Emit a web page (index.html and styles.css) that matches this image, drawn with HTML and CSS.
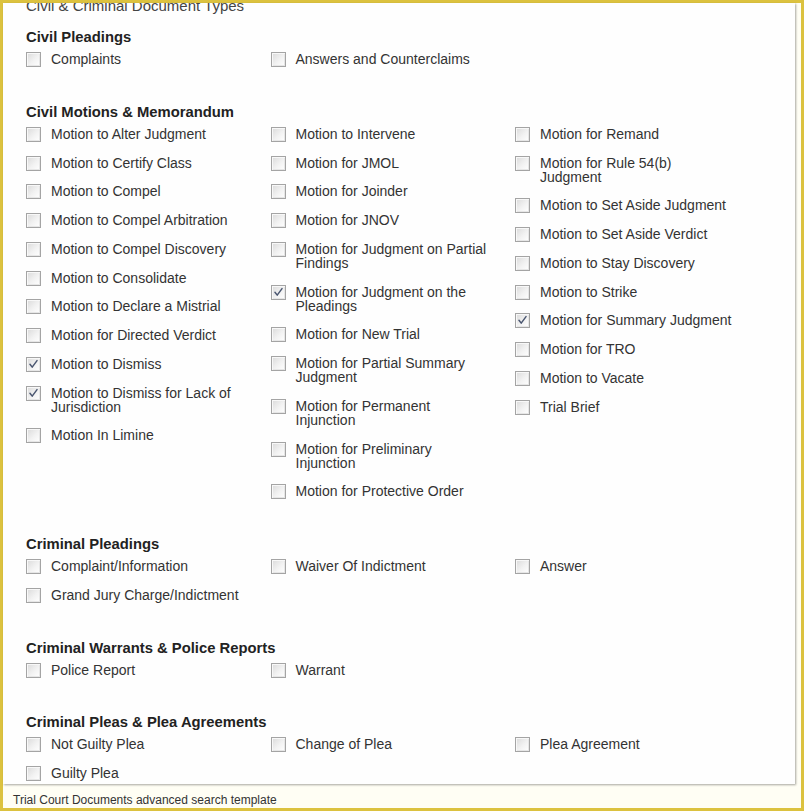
FILE: index.html
```html
<!DOCTYPE html>
<html>
<head>
<meta charset="utf-8">
<title>Trial Court Documents</title>
<link rel="stylesheet" href="styles.css">
</head>
<body>
<div class="frame">
  <div class="panel">
    <div class="title">Civil &amp; Criminal Document Types</div>

    <section class="section">
      <h2 class="heading">Civil Pleadings</h2>
      <div class="cols">
        <div class="col">
          <div class="item"><span class="box"></span><span class="label">Complaints</span></div>
        </div>
        <div class="col">
          <div class="item"><span class="box"></span><span class="label">Answers and Counterclaims</span></div>
        </div>
        <div class="col"></div>
      </div>
    </section>

    <section class="section">
      <h2 class="heading">Civil Motions &amp; Memorandum</h2>
      <div class="cols">
        <div class="col">
          <div class="item"><span class="box"></span><span class="label">Motion to Alter Judgment</span></div>
          <div class="item"><span class="box"></span><span class="label">Motion to Certify Class</span></div>
          <div class="item"><span class="box"></span><span class="label">Motion to Compel</span></div>
          <div class="item"><span class="box"></span><span class="label">Motion to Compel Arbitration</span></div>
          <div class="item"><span class="box"></span><span class="label">Motion to Compel Discovery</span></div>
          <div class="item"><span class="box"></span><span class="label">Motion to Consolidate</span></div>
          <div class="item"><span class="box"></span><span class="label">Motion to Declare a Mistrial</span></div>
          <div class="item"><span class="box"></span><span class="label">Motion for Directed Verdict</span></div>
          <div class="item"><span class="box checked"><svg viewBox="0 0 14 14" width="14" height="14"><path d="M3.2 6.8 L5.6 9.8 L10.8 2.8" /></svg></span><span class="label">Motion to Dismiss</span></div>
          <div class="item"><span class="box checked"><svg viewBox="0 0 14 14" width="14" height="14"><path d="M3.2 6.8 L5.6 9.8 L10.8 2.8" /></svg></span><span class="label">Motion to Dismiss for Lack of Jurisdiction</span></div>
          <div class="item"><span class="box"></span><span class="label">Motion In Limine</span></div>
        </div>
        <div class="col">
          <div class="item"><span class="box"></span><span class="label">Motion to Intervene</span></div>
          <div class="item"><span class="box"></span><span class="label">Motion for JMOL</span></div>
          <div class="item"><span class="box"></span><span class="label">Motion for Joinder</span></div>
          <div class="item"><span class="box"></span><span class="label">Motion for JNOV</span></div>
          <div class="item"><span class="box"></span><span class="label">Motion for Judgment on Partial Findings</span></div>
          <div class="item"><span class="box checked"><svg viewBox="0 0 14 14" width="14" height="14"><path d="M3.2 6.8 L5.6 9.8 L10.8 2.8" /></svg></span><span class="label">Motion for Judgment on the Pleadings</span></div>
          <div class="item"><span class="box"></span><span class="label">Motion for New Trial</span></div>
          <div class="item"><span class="box"></span><span class="label">Motion for Partial Summary Judgment</span></div>
          <div class="item"><span class="box"></span><span class="label">Motion for Permanent Injunction</span></div>
          <div class="item"><span class="box"></span><span class="label">Motion for Preliminary Injunction</span></div>
          <div class="item"><span class="box"></span><span class="label">Motion for Protective Order</span></div>
        </div>
        <div class="col">
          <div class="item"><span class="box"></span><span class="label">Motion for Remand</span></div>
          <div class="item"><span class="box"></span><span class="label">Motion for Rule 54(b) Judgment</span></div>
          <div class="item"><span class="box"></span><span class="label">Motion to Set Aside Judgment</span></div>
          <div class="item"><span class="box"></span><span class="label">Motion to Set Aside Verdict</span></div>
          <div class="item"><span class="box"></span><span class="label">Motion to Stay Discovery</span></div>
          <div class="item"><span class="box"></span><span class="label">Motion to Strike</span></div>
          <div class="item"><span class="box checked"><svg viewBox="0 0 14 14" width="14" height="14"><path d="M3.2 6.8 L5.6 9.8 L10.8 2.8" /></svg></span><span class="label">Motion for Summary Judgment</span></div>
          <div class="item"><span class="box"></span><span class="label">Motion for TRO</span></div>
          <div class="item"><span class="box"></span><span class="label">Motion to Vacate</span></div>
          <div class="item"><span class="box"></span><span class="label">Trial Brief</span></div>
        </div>
      </div>
    </section>

    <section class="section">
      <h2 class="heading">Criminal Pleadings</h2>
      <div class="cols">
        <div class="col">
          <div class="item"><span class="box"></span><span class="label">Complaint/Information</span></div>
          <div class="item"><span class="box"></span><span class="label">Grand Jury Charge/Indictment</span></div>
        </div>
        <div class="col">
          <div class="item"><span class="box"></span><span class="label">Waiver Of Indictment</span></div>
        </div>
        <div class="col">
          <div class="item"><span class="box"></span><span class="label">Answer</span></div>
        </div>
      </div>
    </section>

    <section class="section">
      <h2 class="heading">Criminal Warrants &amp; Police Reports</h2>
      <div class="cols">
        <div class="col">
          <div class="item"><span class="box"></span><span class="label">Police Report</span></div>
        </div>
        <div class="col">
          <div class="item"><span class="box"></span><span class="label">Warrant</span></div>
        </div>
        <div class="col"></div>
      </div>
    </section>

    <section class="section">
      <h2 class="heading">Criminal Pleas &amp; Plea Agreements</h2>
      <div class="cols">
        <div class="col">
          <div class="item"><span class="box"></span><span class="label">Not Guilty Plea</span></div>
          <div class="item"><span class="box"></span><span class="label">Guilty Plea</span></div>
        </div>
        <div class="col">
          <div class="item"><span class="box"></span><span class="label">Change of Plea</span></div>
        </div>
        <div class="col">
          <div class="item"><span class="box"></span><span class="label">Plea Agreement</span></div>
        </div>
      </div>
    </section>
  </div>
  <div class="caption">Trial Court Documents advanced search template</div>
</div>
</body>
</html>
```

FILE: styles.css
```css
* { box-sizing: border-box; }

html, body {
  margin: 0;
  padding: 0;
}

body {
  width: 804px;
  height: 811px;
  overflow: hidden;
  font-family: "Liberation Sans", Arial, sans-serif;
  color: #333;
}

.frame {
  width: 804px;
  height: 811px;
  border: 3px solid #dcc23f;
  background: #fffef4;
  display: flex;
  flex-direction: column;
}

.panel {
  height: 781px;
  margin-right: 6px;
  background: #fefefe;
  box-shadow: 1px 1px 2px rgba(0, 0, 0, 0.35);
  overflow: hidden;
  padding-left: 23px;
  flex: none;
}

.title {
  margin-top: -6px;
  margin-bottom: 13px;
  font-size: 15px;
  line-height: 18px;
  color: #444;
}

.section {
  margin-bottom: 22px;
}

.heading {
  margin: 0 0 6px 0;
  font-size: 14.8px;
  line-height: 18px;
  font-weight: bold;
  color: #222;
}

.cols {
  display: grid;
  grid-template-columns: 244.5px 244.5px 244.5px;
}

.col {
  display: flex;
  flex-direction: column;
}

.item {
  display: flex;
  align-items: flex-start;
  margin-bottom: 14.75px;
}

.box {
  flex: none;
  width: 15px;
  height: 15px;
  margin-bottom: -1px;
  border: 1px solid #a4a4a4;
  background: linear-gradient(135deg, #dadada 0%, #f2f2f2 55%, #ffffff 100%);
  box-shadow: inset 1px 1px 0 #f8f8f8, inset -1px -1px 0 #e6e6e6;
  margin-right: 10px;
  position: relative;
}

.box svg {
  position: absolute;
  left: 0;
  top: 0;
  width: 13px;
  height: 13px;
}

.box svg path {
  fill: none;
  stroke: #4a5670;
  stroke-width: 1.6;
  stroke-linecap: round;
  stroke-linejoin: round;
}

.label {
  width: 194px;
  font-size: 14px;
  line-height: 14px;
  color: #333;
}

.caption {
  margin-top: 9px;
  padding-left: 10px;
  font-size: 12px;
  line-height: 14px;
  color: #333;
}
```
